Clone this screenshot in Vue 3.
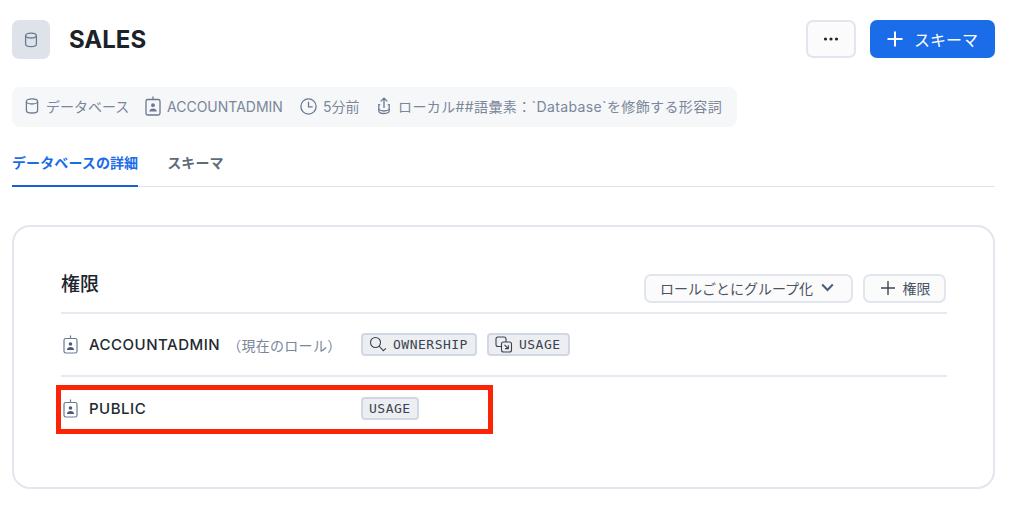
<script setup>
const meta = [
  { icon: 'db', text: 'データベース' },
  { icon: 'badge', text: 'ACCOUNTADMIN' },
  { icon: 'clock', text: '5分前' },
  { icon: 'share', text: 'ローカル##語彙素：`Database`を修飾する形容詞' }
]
</script>

<template>
  <div class="page">
    <header class="head">
      <div class="head-icon">
        <svg width="18" height="18" viewBox="0 0 18 18" fill="none" stroke="#6b7a94" stroke-width="1.3">
          <ellipse cx="9" cy="4.6" rx="5.4" ry="2.4" />
          <path d="M3.6 4.6v8.6c0 1.4 2.4 2.4 5.4 2.4s5.4-1 5.4-2.4V4.6" />
        </svg>
      </div>
      <h1 class="title">SALES</h1>
      <button class="more">
        <svg width="16" height="4" viewBox="0 0 16 4" fill="#1e252d">
          <circle cx="2.5" cy="2" r="1.6" /><circle cx="8" cy="2" r="1.6" /><circle cx="13.5" cy="2" r="1.6" />
        </svg>
      </button>
      <button class="primary">
        <svg width="16" height="16" viewBox="0 0 16 16" stroke="#fff" stroke-width="2" fill="none">
          <path d="M8 0.5v15M0.5 8h15" />
        </svg>
        <span>スキーマ</span>
      </button>
    </header>

    <div class="meta">
      <div v-for="m in meta" :key="m.icon" class="meta-item" :class="'mi-' + m.icon">
        <svg v-if="m.icon === 'db'" width="16" height="18" viewBox="0 0 16 18" fill="none" stroke="#6b7a94" stroke-width="1.3">
          <ellipse cx="8" cy="4.4" rx="5.6" ry="2.6" />
          <path d="M2.4 4.4v9c0 1.5 2.5 2.6 5.6 2.6s5.6-1.1 5.6-2.6v-9" />
        </svg>
        <svg v-else-if="m.icon === 'badge'" width="16" height="20" viewBox="0 0 16 20" fill="none" stroke="#6b7a94" stroke-width="1.3">
          <rect x="1" y="3.5" width="14" height="15.5" rx="1.8" />
          <path d="M8 0.5v3" />
          <circle cx="8" cy="9.2" r="1.9" fill="#6b7a94" stroke="none" />
          <path d="M4.2 15.6c.3-2.2 1.8-3.2 3.8-3.2s3.5 1 3.8 3.2z" fill="#6b7a94" stroke="none" />
        </svg>
        <svg v-else-if="m.icon === 'clock'" width="17" height="17" viewBox="0 0 17 17" fill="none" stroke="#6b7a94" stroke-width="1.3">
          <circle cx="8.5" cy="8.5" r="7.6" />
          <path d="M8.5 3.8v5h4.2" />
        </svg>
        <svg v-else width="14" height="18" viewBox="0 0 14 18" fill="none" stroke="#6b7a94" stroke-width="1.3">
          <path d="M7 11V1.2M3.6 4.4 7 1.2l3.4 3.2" />
          <path d="M3.2 7.6H1.8v6.2c0 1.6 1.8 2.7 5.2 2.7s5.2-1.1 5.2-2.7V7.6h-1.4" />
          <path d="M1.8 12.4c1 1 3 1.6 5.2 1.6s4.2-.6 5.2-1.6" />
        </svg>
        <span>{{ m.text }}</span>
      </div>
    </div>

    <nav class="tabs">
      <a class="tab active">データベースの詳細</a>
      <a class="tab">スキーマ</a>
    </nav>

    <section class="card">
      <div class="card-head">
        <h2 class="card-title">権限</h2>
        <button class="ghost group">
          <span>ロールごとにグループ化</span>
          <svg width="13" height="9" viewBox="0 0 13 9" fill="none" stroke="#4a5c7c" stroke-width="2">
            <path d="M1.2 1.5 6.5 7l5.3-5.5" />
          </svg>
        </button>
        <button class="ghost add">
          <svg width="14" height="14" viewBox="0 0 14 14" fill="none" stroke="#3a4450" stroke-width="1.4">
            <path d="M7 0v14M0 7h14" />
          </svg>
          <span>権限</span>
        </button>
      </div>

      <div class="row first">
        <svg class="role-icon" width="15" height="19" viewBox="0 0 15 19" fill="none" stroke="#6b7a94" stroke-width="1.2">
          <rect x="1" y="3.5" width="13" height="14.5" rx="1.8" />
          <path d="M7.5 .5v3" />
          <circle cx="7.5" cy="9" r="1.8" fill="#4a5c7c" stroke="none" />
          <path d="M3.8 15c.3-2 1.7-3 3.7-3s3.4 1 3.7 3z" fill="#4a5c7c" stroke="none" />
        </svg>
        <div class="role"><span class="role-name">ACCOUNTADMIN</span><span class="role-note">（現在のロール）</span></div>
        <div class="chips">
          <span class="chip icon-chip">
            <svg width="18" height="17" viewBox="0 0 18 17" fill="none" stroke="#3a4450" stroke-width="1.1">
              <circle cx="6.5" cy="6.5" r="5" />
              <path d="M10 10l4.3 4.7 2.6-2.3" />
            </svg>
            OWNERSHIP
          </span>
          <span class="chip icon-chip">
            <svg width="18" height="17" viewBox="0 0 18 17" fill="none" stroke="#3a4450" stroke-width="1.1">
              <path d="M6.5 10.5H3a2 2 0 0 1-2-2V3a2 2 0 0 1 2-2h6a2 2 0 0 1 2 2v3" />
              <rect x="6.5" y="6" width="10" height="10" rx="2" />
              <path d="M9.5 8.8l3.6 3.6M13.3 9.3v3.3H10" />
            </svg>
            USAGE
          </span>
        </div>
      </div>

      <div class="row second">
        <svg class="role-icon" width="15" height="19" viewBox="0 0 15 19" fill="none" stroke="#6b7a94" stroke-width="1.2">
          <rect x="1" y="3.5" width="13" height="14.5" rx="1.8" />
          <path d="M7.5 .5v3" />
          <circle cx="7.5" cy="9" r="1.8" fill="#4a5c7c" stroke="none" />
          <path d="M3.8 15c.3-2 1.7-3 3.7-3s3.4 1 3.7 3z" fill="#4a5c7c" stroke="none" />
        </svg>
        <div class="role"><span class="role-name">PUBLIC</span></div>
        <div class="chips"><span class="chip">USAGE</span></div>
        <div class="highlight"></div>
      </div>
    </section>
  </div>
</template>

<style>
html, body { margin: 0; background: #fff; }
</style>

<style scoped>
.page {
  box-sizing: border-box;
  width: 1024px;
  height: 515px;
  overflow: hidden;
  padding: 20px 29px 0 12px;
  font-family: Inter, "Noto Sans CJK JP", sans-serif;
  color: #1e252d;
}
button { font-family: inherit; cursor: pointer; margin: 0; }

.head { display: flex; align-items: flex-start; height: 39px; }
.head-icon {
  width: 38px; height: 39px; border-radius: 7px; background: #dee3ea;
  display: flex; align-items: center; justify-content: center;
}
.title { margin: 0 0 0 19px; font-size: 24px; font-weight: 700; flex: 1; line-height: 39px; color: #1b222a; }
.more {
  width: 50px; height: 38px; border: 2px solid #e1e5ee; border-radius: 7px; background: #fbfbfc;
  display: flex; align-items: center; justify-content: center; padding: 0;
}
.primary {
  width: 125px; height: 38px; margin-left: 14px; border: 0; border-radius: 7px; background: #1a6ce8; color: #fff;
  display: flex; align-items: center; justify-content: center; gap: 11px; font-size: 16px; padding: 0;
}

.meta {
  display: inline-flex; align-items: center; box-sizing: border-box; width: 725px; height: 40px;
  margin-top: 28px; padding: 0 0 2px 12px; border-radius: 8px; background: #f6f7f8;
  font-size: 14px; color: #7a869b; vertical-align: top;
}
.meta-item { display: flex; align-items: center; gap: 6px; white-space: nowrap; }
.mi-db { width: 121px; }
.mi-badge { width: 155px; }
.mi-clock { width: 77px; }
.mi-share { gap: 7px; letter-spacing: 0.38px; }

.tabs { display: flex; gap: 29px; height: 60px; box-sizing: border-box; border-bottom: 1px solid #dfe3f0; }
.tab {
  box-sizing: border-box; height: 60px; padding-top: 25px; font-size: 14px; font-weight: 600; line-height: 21px; color: #5f6b7d; letter-spacing: 0.1px;
}
.tab.active { color: #1a6ce8; border-bottom: 2px solid #1a5fd8; }

.card {
  box-sizing: border-box; height: 264px; margin-top: 38px; padding: 45px 46px 0 47px; border: 2px solid #e3e6ec; border-radius: 18px;
}
.card-head { display: flex; align-items: flex-start; height: 40px; border-bottom: 2px solid #e6e9f0; }
.card-title { margin: 1px auto 0 0; font-size: 19px; font-weight: 500; line-height: 24px; color: #1e252d; }
.ghost {
  box-sizing: border-box; height: 29px; margin-top: 2px; border: 2px solid #e1e5ee; border-radius: 7px; background: #fbfbfc; color: #4a5463;
  display: flex; align-items: center; justify-content: center; font-size: 14px; padding: 0 0 2px;
}
.group { width: 209px; gap: 8px; padding-right: 3px; }
.add { width: 83px; margin: 2px 1px 0 10px; gap: 8px; padding-left: 2px; }

.row { position: relative; display: flex; align-items: center; box-sizing: border-box; }
.first { height: 63px; border-bottom: 2px solid #e6e9f0; }
.second { height: 62px; }
.role-icon { flex: none; margin-left: 2px; }
.role { width: 272px; margin-left: 11px; display: flex; align-items: center; white-space: nowrap; }
.role-name { font-size: 15px; font-weight: 500; letter-spacing: 0.5px; color: #22292f; }
.role-note { margin-left: 7px; font-size: 14px; letter-spacing: 0.3px; color: #7a869b; }
.chips { display: flex; gap: 10px; }
.chip {
  display: flex; align-items: center; gap: 6px; box-sizing: border-box; height: 23px; padding: 0 6px;
  border: 2px solid #d2d8e3; border-radius: 4px; background: #eceef2;
  font-family: "DejaVu Sans Mono", monospace; font-size: 13px; letter-spacing: 0.5px; color: #3a4450;
}
.icon-chip { padding-right: 7px; }
.highlight {
  position: absolute; left: -5px; top: 8px; width: 437px; height: 49px; box-sizing: border-box;
  border: 5px solid #fb2407; pointer-events: none;
}
</style>
